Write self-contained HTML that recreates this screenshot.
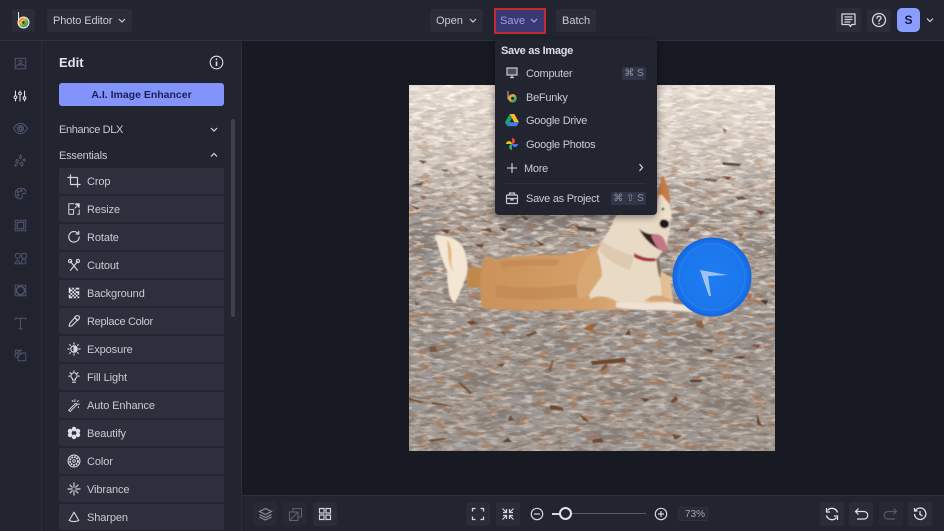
<!DOCTYPE html>
<html><head><meta charset="utf-8"><style>
*{box-sizing:border-box}
html,body{margin:0;width:944px;height:531px;overflow:hidden;background:#181a23}
body{font-family:"Liberation Sans","DejaVu Sans",sans-serif;font-size:11px;color:#c9cbd3;position:relative}
.a{position:absolute}
.t{position:absolute;white-space:nowrap;line-height:14px}
.btn{position:absolute;background:#2a2c38;border-radius:3px}
.it{position:absolute;left:59px;width:165px;height:26px;background:#2d2f3c;border-radius:2px}
.it span{position:absolute;left:28px;top:7px;line-height:14px;color:#c9cbd3;letter-spacing:-.1px;white-space:nowrap}
.it svg{position:absolute;left:8px;top:6px;width:14px;height:14px}
svg{display:block;overflow:visible}
.ic{fill:none;stroke:#d5d6dc;stroke-width:1.3;stroke-linecap:round;stroke-linejoin:round}
.r{position:absolute;left:14px;width:13px;height:13px;fill:none;stroke:#515670;stroke-width:1.2}
.k{position:absolute;background:#323547;border-radius:2px;color:#8d90a0;font-size:10px;line-height:13px;text-align:center}
</style></head><body>

<!-- canvas -->
<div class="a" style="left:242px;top:41px;width:702px;height:455px;background:#181a23"></div>

<!-- photo -->
<svg class="a" style="left:409px;top:85px" width="366" height="366" viewBox="409 85 366 366">
<defs>
<linearGradient id="sand" x1="0" y1="0" x2="0" y2="1">
<stop offset="0" stop-color="#e8ddd3"/><stop offset=".2" stop-color="#ddd0c4"/><stop offset=".36" stop-color="#b3a69b"/><stop offset=".65" stop-color="#a1968d"/><stop offset="1" stop-color="#a59b91"/>
</linearGradient>
<linearGradient id="fade" x1="0" y1="0" x2="0" y2="1">
<stop offset="0" stop-color="#fff" stop-opacity=".15"/><stop offset=".22" stop-color="#fff" stop-opacity=".45"/><stop offset=".38" stop-color="#fff"/><stop offset="1" stop-color="#fff"/>
</linearGradient>
<linearGradient id="fade2" x1="0" y1="0" x2="0" y2="1">
<stop offset="0" stop-color="#fff"/><stop offset=".3" stop-color="#fff" stop-opacity=".7"/><stop offset="1" stop-color="#fff" stop-opacity=".4"/>
</linearGradient>
<mask id="nm"><rect x="409" y="85" width="366" height="366" fill="url(#fade)"/></mask>
<mask id="nm2"><rect x="409" y="85" width="366" height="366" fill="url(#fade2)"/></mask>
<filter id="n1" x="0" y="0" width="100%" height="100%"><feTurbulence type="fractalNoise" baseFrequency=".07 .22" numOctaves="3" seed="7"/><feColorMatrix values="0 0 0 0 .24  0 0 0 0 .19  0 0 0 0 .16  3.6 0 0 0 -1.6"/></filter>
<filter id="n2" x="0" y="0" width="100%" height="100%"><feTurbulence type="fractalNoise" baseFrequency=".09 .28" numOctaves="3" seed="21"/><feColorMatrix values="0 0 0 0 .97  0 0 0 0 .93  0 0 0 0 .89  3 0 0 0 -1.4"/></filter>
<filter id="n3" x="0" y="0" width="100%" height="100%"><feTurbulence type="fractalNoise" baseFrequency=".022 .055" numOctaves="3" seed="4"/><feColorMatrix values="0 0 0 0 .32  0 0 0 0 .3  0 0 0 0 .29  4 0 0 0 -1.85"/></filter>
<filter id="n4" x="0" y="0" width="100%" height="100%"><feTurbulence type="fractalNoise" baseFrequency=".06 .16" numOctaves="2" seed="33"/><feColorMatrix values="0 0 0 0 .36  0 0 0 0 .2  0 0 0 0 .12  0 9 0 0 -5.6"/></filter>
<filter id="b1"><feGaussianBlur stdDeviation=".6"/></filter>
<filter id="b3"><feGaussianBlur stdDeviation=".9"/></filter>
<filter id="b2"><feGaussianBlur stdDeviation="2.5"/></filter>
<radialGradient id="fr" cx=".5" cy=".5" r=".5"><stop offset="0" stop-color="#1f7cf0"/><stop offset=".85" stop-color="#1b76ec"/><stop offset="1" stop-color="#1565dc"/></radialGradient>
<linearGradient id="fur" x1="0" y1="0" x2="1" y2="0"><stop offset="0" stop-color="#cb9159"/><stop offset=".6" stop-color="#d4a06a"/><stop offset="1" stop-color="#e4c29a"/></linearGradient>
</defs>
<rect x="409" y="85" width="366" height="366" fill="url(#sand)"/>
<!-- grey sand clumps -->
<g fill="#6f6a66" opacity=".6" filter="url(#b2)">
<ellipse cx="500" cy="420" rx="24" ry="10"/><ellipse cx="600" cy="436" rx="26" ry="8"/><ellipse cx="475" cy="380" rx="20" ry="9"/><ellipse cx="726" cy="404" rx="24" ry="8"/>
<ellipse cx="625" cy="392" rx="22" ry="8"/><ellipse cx="690" cy="340" rx="22" ry="8"/><ellipse cx="440" cy="345" rx="22" ry="8"/><ellipse cx="560" cy="345" rx="20" ry="9"/><ellipse cx="540" cy="388" rx="18" ry="8"/>
<ellipse cx="755" cy="340" rx="16" ry="8"/><ellipse cx="425" cy="240" rx="14" ry="18"/><ellipse cx="540" cy="225" rx="40" ry="7"/><ellipse cx="760" cy="250" rx="14" ry="8"/>
</g>
<g mask="url(#nm)"><rect x="409" y="85" width="366" height="366" filter="url(#n3)"/><rect x="409" y="85" width="366" height="366" filter="url(#n1)"/><rect x="409" y="85" width="366" height="366" filter="url(#n4)"/></g>
<g mask="url(#nm2)"><rect x="409" y="85" width="366" height="366" filter="url(#n2)"/></g>
<!-- leaves -->
<g fill="#6b3f28" filter="url(#b1)" opacity=".9">
<path d="M591 361l34-3 1 4-34 3z"/><path d="M583 329q7-6 14-5l-6 7z" fill="#a65a2a"/><path d="M548 370l4-10 2 1-3 10z" fill="#8a5a3a"/>
<path d="M433 402l20 4 0 1-22-3z"/><path d="M460 382l12 11-2 1-11-11z"/><path d="M550 405l12 2 2 4-14-2z"/><path d="M689 380l14 0-3 2-9 0z" fill="#3c2a22"/>
<path d="M695 322l7-2 2 9-7-2z" fill="#8b5a3a"/><path d="M732 358q7-3 14-2l-4 3z"/><path d="M429 347l7-1 1 6-7 0z" fill="#7b5038"/>
<path d="M409 398l16 4-5 1-11-3z"/><path d="M600 370l6-7 2 3-5 5z" fill="#7a5238"/><path d="M640 398l10 1-5 3z"/><path d="M670 402l6-6 2 4-5 3z"/>
<path d="M757 414l4 10 3 3-7-2z"/><path d="M592 440l9-2 3 4-11 1z"/><path d="M502 442l6-4 4 4z" fill="#4d382c"/><path d="M428 440l16-2 3 1-16 3z"/>
<path d="M580 415l6 3 3 4-6-2z"/><path d="M672 434l10 2-7 4z"/><path d="M496 365l9-2-3 4z"/><path d="M625 335l4-6 2 6z"/><path d="M702 348l12 2-3 3z" fill="#4f3a2e"/>
<path d="M750 345l11-1-3 4z" fill="#7b4f32"/><path d="M467 322l6-2 4 3-6 2z"/><path d="M510 415l4 5-6 1z"/><path d="M526 335l10-4 1 2-9 4z"/>
<path d="M501 333l3-3 2 7z" fill="#8b5a3a"/><path d="M410 205l10 3-3 2z"/><path d="M440 229l10 1-3 4z"/><path d="M520 215l9 3-3 3z" fill="#6d4a34"/><path d="M480 230l10-2 2 4z"/>
<path d="M535 240l10 4-4 2z"/><path d="M420 195l7 2-4 3z" fill="#9a5f3a"/><path d="M575 226l20 2 2 4-18-2z" fill="#54483f"/><path d="M680 230l10-2-2 4z" fill="#6b4a32"/>
<path d="M735 197l8-1 3 3-8 1z" fill="#6e4c36"/><path d="M755 210l10 1-4 4z"/><path d="M702 180l9-2-2 3z"/><path d="M722 176l10 1-4 3z"/>
<path d="M735 233l9 0-3 4z" fill="#8a5a3a"/><path d="M746 293l6 1-1 6-5-2z" fill="#b5683a"/>
<path d="M475 245l9-1-2 4z"/><path d="M500 227l7 2-3 3z"/><path d="M414 300l6 4-4 2z" fill="#8a5a3a"/><path d="M760 300l8 0-2 5z" fill="#3f332b"/>
<path d="M722 128l5 2-2 4z" fill="#8f6d50"/><path d="M722 162l20 2-3 2-16-1z" fill="#4d4038"/><path d="M702 178l16 2-3 2z" fill="#6a5448"/>
<path d="M418 160l9 1-4 3z" fill="#5c534c"/><path d="M440 170l9-1-3 3z" fill="#6c5f55"/><path d="M410 185l14-3-3 4z" fill="#5a4c44"/>
<path d="M475 175l9 1-4 2z" fill="#6d6056"/><path d="M520 185l10 2-4 2z" fill="#6a5a50"/>
</g>
<!-- dog -->
<g filter="url(#b3)">
<path d="M467 269l22-2 4 22-26-2z" fill="#c2874c"/>
<path d="M482 308q-4-24 0-44 2-6 6-8l6 4q30-6 64-5 22-2 40-10l12-8 60 40 4 30q-18 2-40 2-40 2-80 1-30 2-72-2z" fill="url(#fur)"/>
<path d="M500 262q30-4 60-2l-4 6q-28-2-54 2zM495 285q40 6 90-2l4 12q-50 8-92 2z" fill="#bd8450" opacity=".55"/>
<path d="M435 235q20 0 28 12 6 14 4 26-4 14-12 30-4-2-6-10-2-12-2-22-6-12-12-36z" fill="#f3e6d2"/>
<path d="M447 240q6 6 4 22l2 10q-2-4-4-10z" fill="#e0a868" opacity=".8"/>
<path d="M608 232l10-20 52 3 0 14-4 18-8 10 4 38q-20 14-46 6-14-8-26-2-6-30 18-67z" fill="#e9dac6"/>
<path d="M600 240q14 10 34 16l-4 14q-18-6-30-18z" fill="#d8c2a8" opacity=".7"/>
<path d="M596 248q6 16 6 28l-14 20-10 2q-6-26 18-50z" fill="#d8a873"/>
<path d="M616 302q24 2 50 0 16 2 30 6l-2 4q-24-2-42-2-22 0-36-3z" fill="#efe2d3"/>
<path d="M652 296q12-2 22 6l-16-1-14 0z" fill="#d5a676"/>
<path d="M657 198l5-23q8 12 8 28l-8 8z" fill="#c87b44"/><path d="M655 215l4-20 3 0 8 10 2 14-16 0z" fill="#efe0cc"/>
<circle cx="663" cy="209" r="1.300" fill="#33261c"/>
<path d="M669 222q-4-4-8-2-3 4 0 7 4 3 8-1z" fill="#1f1917"/>
<path d="M639 229q8 6 16 5l13 16q-2 3-6 1-15-7-23-22z" fill="#33201f"/>
<path d="M651 235q9-3 13 4 4 8 3 13-6 0-10-5-4-6-6-12z" fill="#c27985"/>
<path d="M634 253q10 6 21 5l1 3q-12 2-22-4z" fill="#a52a34"/>
<path d="M656 258l3 0 2 14-1 7-2-7z" fill="#7e7058"/>
</g>
<!-- frisbee -->
<circle cx="712" cy="277" r="39.500" fill="url(#fr)"/>
<circle cx="712" cy="277" r="33" fill="none" stroke="#3a8df5" stroke-width="1" opacity=".5"/>
<path d="M700 270l28 5-20 1 3 20-2 0z" fill="#9dc3f0"/>
</svg>

<!-- left rail + panel -->
<div class="a" style="left:0;top:41px;width:41px;height:490px;background:#21232e"></div>
<div class="a" style="left:41px;top:41px;width:1px;height:490px;background:#2b2d39"></div>
<div class="a" style="left:42px;top:41px;width:199px;height:490px;background:#22242f"></div>
<div class="a" style="left:241px;top:41px;width:1px;height:490px;background:#2b2d39"></div>

<!-- top bar -->
<div class="a" style="left:0;top:0;width:944px;height:41px;background:#22242f;border-bottom:1px solid #2f313d"></div>
<div class="btn" style="left:12px;top:9px;width:23px;height:23px"></div>
<svg class="a" style="left:12px;top:9px" width="23" height="23" viewBox="0 0 23 23">
<path d="M6.500 3v13" stroke="#e8e8ec" stroke-width="1" fill="none"/>
<defs><linearGradient id="lg" x1="0" y1="0" x2="1" y2="1"><stop offset="0" stop-color="#e54b3c"/><stop offset=".35" stop-color="#f2b632"/><stop offset=".65" stop-color="#4caf50"/><stop offset="1" stop-color="#4a6fd8"/></linearGradient></defs>
<circle cx="11.500" cy="13.500" r="6" fill="#f1f1f3"/><circle cx="11.500" cy="13.500" r="5" fill="url(#lg)"/><circle cx="11.500" cy="13.500" r="1.200" fill="#222"/>
</svg>
<div class="btn" style="left:47px;top:9px;width:85px;height:23px"></div>
<div class="t" style="left:53px;top:14px;letter-spacing:-.1px">Photo Editor</div>
<svg class="a" style="left:118px;top:18px" width="8" height="6"><path d="M1 1l3 3 3-3" fill="none" stroke="#c9cbd3" stroke-width="1.200"/></svg>

<div class="btn" style="left:430px;top:9px;width:53px;height:23px"></div>
<div class="t" style="left:436px;top:14px">Open</div>
<svg class="a" style="left:469px;top:18px" width="8" height="6"><path d="M1 1l3 3 3-3" fill="none" stroke="#c9cbd3" stroke-width="1.200"/></svg>

<div class="a" style="left:494px;top:8px;width:52px;height:26px;background:#3a3873;border:2px solid #c22b30"></div>
<div class="t" style="left:500px;top:14px;color:#9b9ff0">Save</div>
<svg class="a" style="left:530px;top:18px" width="8" height="6"><path d="M1 1l3 3 3-3" fill="none" stroke="#a3a7f5" stroke-width="1.200"/></svg>

<div class="btn" style="left:556px;top:9px;width:40px;height:23px"></div>
<div class="t" style="left:562px;top:14px">Batch</div>

<div class="btn" style="left:836px;top:8px;width:25px;height:24px"></div>
<svg class="a" style="left:840px;top:12px" width="17" height="17" viewBox="0 0 17 17"><path class="ic" d="M2 2h13v10.500h-3.500l-1 2-1.500-2H2zM5 5h7M5 7.500h7M5 10h5" stroke-width="1.100"/></svg>
<div class="btn" style="left:867px;top:9px;width:24px;height:23px"></div>
<svg class="a" style="left:871px;top:12px" width="16" height="16" viewBox="0 0 16 16"><circle class="ic" cx="8" cy="8" r="6.500" stroke-width="1.200"/><path class="ic" d="M6 6.300q0-2 2-2t2 1.800q0 1-1 1.500t-1 1.700" stroke-width="1.100"/><circle cx="8" cy="11.500" r=".8" fill="#d5d6dc"/></svg>
<div class="a" style="left:897px;top:8px;width:23px;height:24px;background:#8b9dff;border-radius:5px;color:#15173f;font-weight:bold;font-size:12px;line-height:24px;text-align:center">S</div>
<svg class="a" style="left:925px;top:17px" width="10" height="7"><path d="M2 1.500l3 3 3-3" fill="none" stroke="#d5d6dc" stroke-width="1.200"/></svg>

<!-- rail icons -->
<svg class="r" style="top:56.500px" viewBox="0 0 16 16"><rect x="1.500" y="1.500" width="13" height="13"/><circle cx="8" cy="6" r="2"/><path d="M1.500 12l4-3q2.500 2 5 0l4 3"/></svg>
<svg class="a" style="left:13px;top:89px;width:14px;height:14px" viewBox="0 0 17 17" fill="none" stroke="#dfe0e6" stroke-width="1.300"><path d="M3 2v6M3 12v3M8.500 2v1M8.500 8v7M14 2v7M14 13v2"/><circle cx="3" cy="10" r="1.700"/><circle cx="8.500" cy="5.500" r="1.700"/><circle cx="14" cy="11" r="1.700"/></svg>
<svg class="r" style="left:13px;width:15px;height:15px;top:120.500px" viewBox="0 0 16 16"><path d="M.5 8q3.500-5.500 7.500-5.500T15.500 8q-3.500 5.500-7.500 5.500T.5 8z"/><circle cx="8" cy="8" r="3.200"/><circle cx="8" cy="8" r="1.500"/></svg>
<svg class="r" style="top:153.500px" viewBox="0 0 16 16" stroke-width="1.500"><path d="M8 1l1.500 2.500L8 6 6.500 3.500zM12.500 6l1.500 1.500-1.500 1.500L11 7.500zM4 6.500L6 9 4 12 2 9zM9.500 10l2 2-2 3-2-3zM2 13l1 1-1 1-1-1z"/></svg>
<svg class="r" style="top:186.500px" viewBox="0 0 16 16"><path d="M8 1.500q6.500 0 6.500 5 0 2-2 1.500-3-.5-2.500 2 1 3-2 4.500-6 0-6.500-6Q1.500 2 8 1.500z"/><circle cx="5" cy="6" r="1" fill="#515670"/><circle cx="9" cy="4.500" r="1" fill="#515670"/><circle cx="5" cy="10" r="1" fill="#515670"/></svg>
<svg class="r" style="top:218.500px" viewBox="0 0 16 16"><rect x="1.500" y="1.500" width="13" height="13"/><rect x="4" y="4" width="8" height="8" stroke-width="1.500"/></svg>
<svg class="r" style="top:251.500px" viewBox="0 0 16 16"><circle cx="4.500" cy="4.500" r="3"/><rect x="9.500" y="2" width="5.500" height="5.500"/><path d="M4.500 9.500L8 14.500H1z"/><circle cx="12" cy="12" r="2.800"/></svg>
<svg class="r" style="top:283.500px" viewBox="0 0 16 16"><rect x="1.500" y="1.500" width="13" height="13"/><circle cx="8" cy="8" r="5" stroke-width="1.800"/></svg>
<svg class="r" style="top:316.500px" viewBox="0 0 16 16"><path d="M1.500 3.500v-2h13v2M8 1.500v13M5.500 14.500h5"/></svg>
<svg class="r" style="top:348.500px" viewBox="0 0 16 16"><rect x="5" y="5" width="9.500" height="9.500"/><path d="M1.500 10V2.500q0-1 1-1H10M2 7q3-4.500 7-5M3 11q5-6 9-6"/></svg>

<!-- panel head -->
<div class="t" style="left:59px;top:56px;font-size:13px;font-weight:bold;color:#e4e5ea">Edit</div>
<svg class="a" style="left:209px;top:54.500px" width="15" height="15" viewBox="0 0 15 15" fill="none" stroke="#dcdde3" stroke-width="1.100"><circle cx="7.500" cy="7.500" r="6.300"/><path d="M7.500 6.500v4.500" stroke-width="1.600"/><circle cx="7.500" cy="4.300" r=".9" fill="#dcdde3" stroke="none"/></svg>
<div class="a" style="left:59px;top:83px;width:165px;height:23px;background:#8294fb;border-radius:3px;color:#1a1f56;font-weight:bold;font-size:10.500px;line-height:24px;text-align:center">A.I. Image Enhancer</div>
<div class="t" style="left:59px;top:123px;letter-spacing:-.35px">Enhance DLX</div>
<svg class="a" style="left:210px;top:127px" width="8" height="6"><path d="M1 1l3 3 3-3" fill="none" stroke="#d5d6dc" stroke-width="1.200"/></svg>
<div class="t" style="left:59px;top:149px;letter-spacing:-.2px">Essentials</div>
<svg class="a" style="left:210px;top:152px" width="8" height="6"><path d="M1 4.500l3-3 3 3" fill="none" stroke="#d5d6dc" stroke-width="1.200"/></svg>

<!-- list -->
<div class="it" style="top:168px"><svg class="ic" viewBox="0 0 16 16"><path d="M4 1v11h11M1 4h11v11"/></svg><span>Crop</span></div>
<div class="it" style="top:196px"><svg class="ic" viewBox="0 0 16 16"><path d="M2 8V2h6M10 2h4v4M14 9v5h-2M2 8.500h5.500V14H2zM9 7l4-4M10 3h3v3" stroke-width="1.100"/></svg><span>Resize</span></div>
<div class="it" style="top:224px"><svg class="ic" viewBox="0 0 16 16"><path d="M13 4.500A6 6 0 1 0 14 8M13.500 1.500v3.200h-3.200"/></svg><span>Rotate</span></div>
<div class="it" style="top:252px"><svg class="ic" viewBox="0 0 16 16"><path d="M4 14L12 4M12 14L4 4"/><circle cx="3.500" cy="3.500" r="1.800"/><circle cx="12.500" cy="3.500" r="1.800"/></svg><span>Cutout</span></div>
<div class="it" style="top:280px"><svg viewBox="0 0 16 16"><rect x="2" y="2" width="12" height="12" fill="#e2e3e8"/><path d="M4 2h2v2H4zM8 2h2v2H8zM12 4h2v2h-2zM6 4h2v2H6zM10 4h2v2h-2zM4 6h2v2H4zM8 6h2v2H8zM2 8h2v2H2zM6 8h2v2H6zM10 8h2v2h-2zM4 10h2v2H4zM8 10h2v2H8zM12 10h2v2h-2zM6 12h2v2H6zM10 12h2v2h-2z" fill="#2d2f3c"/></svg><span>Background</span></div>
<div class="it" style="top:308px"><svg class="ic" viewBox="0 0 16 16"><path d="M9 4l3 3-6.500 6.500-3 .5.500-3zM10 2.500q2-1.500 3.500 0t0 3.500L12 7.500 8.500 4z"/></svg><span style="letter-spacing:-.3px">Replace Color</span></div>
<div class="it" style="top:336px"><svg class="ic" viewBox="0 0 16 16"><circle cx="8" cy="8" r="3.700"/><path d="M8 4.500a3.500 3.500 0 0 1 0 7z" fill="#d5d6dc"/><path d="M8 1v1.500M8 13.500V15M1 8h1.500M13.500 8H15M3 3l1 1M12 12l1 1M3 13l1-1M12 4l1-1"/></svg><span>Exposure</span></div>
<div class="it" style="top:364px"><svg class="ic" viewBox="0 0 16 16"><path d="M6.500 11.500q0-2-1.500-3a3.500 3.500 0 1 1 6 0q-1.500 1-1.500 3zM6.500 14h3M8 1v1M2 7h1M13 7h1M3.500 3l.8.8M12.500 3l-.8.8"/></svg><span>Fill Light</span></div>
<div class="it" style="top:392px"><svg class="ic" viewBox="0 0 16 16"><path d="M2 14L10 6l1.500 1.500L3.500 15.500zM9 2v2M13 3l-1 1M14 7h-2M6 3l1 1M13 10v1" stroke-width="1.200"/></svg><span>Auto Enhance</span></div>
<div class="it" style="top:420px"><svg viewBox="0 0 16 16" fill="#dfe0e6"><circle cx="8" cy="3.500" r="2.600"/><circle cx="8" cy="12.500" r="2.600"/><circle cx="3.500" cy="5.800" r="2.600"/><circle cx="12.500" cy="5.800" r="2.600"/><circle cx="3.500" cy="10.200" r="2.600"/><circle cx="12.500" cy="10.200" r="2.600"/><circle cx="8" cy="8" r="1.600" fill="#2d2f3c"/></svg><span>Beautify</span></div>
<div class="it" style="top:448px"><svg viewBox="0 0 16 16" fill="none" stroke="#dfe0e6"><circle cx="8" cy="8" r="6.800" stroke-width="1.200"/><circle cx="8" cy="8" r="4.500" stroke-width="2" stroke-dasharray="2 1"/><circle cx="8" cy="8" r="1.500" stroke-width="1"/></svg><span>Color</span></div>
<div class="it" style="top:476px"><svg class="ic" viewBox="0 0 16 16"><path d="M8 1v5M8 10v5M1 8h5M10 8h5M3.500 3.500L6 6M10 10l2.500 2.500M3.500 12.500L6 10M10 6l2.500-2.500"/></svg><span>Vibrance</span></div>
<div class="it" style="top:504px"><svg class="ic" viewBox="0 0 16 16"><path d="M8 2.500l5.500 9.500q-5.500 2.500-11 0z"/></svg><span>Sharpen</span></div>
<div class="a" style="left:231px;top:119px;width:4px;height:198px;background:#3e404e;border-radius:2px"></div>

<!-- bottom bar -->
<div class="a" style="left:242px;top:495px;width:702px;height:36px;background:#22242f;border-top:1px solid #2d2f3b"></div>
<div class="btn" style="left:253px;top:502px;width:24px;height:24px;background:#272935"></div>
<svg class="a" style="left:258px;top:507px" width="15" height="15" viewBox="0 0 15 15" fill="none" stroke="#8d8f9b" stroke-width="1.100"><path d="M7.500 1.500l6 3-6 3-6-3zM1.500 7.500l6 3 6-3M1.500 10l6 3 6-3"/></svg>
<div class="btn" style="left:283px;top:502px;width:24px;height:24px;background:#262833"></div>
<svg class="a" style="left:288px;top:507px" width="15" height="15" viewBox="0 0 15 15" fill="none" stroke="#5f616c" stroke-width="1.100"><rect x="1.500" y="5" width="8.500" height="8.500"/><path d="M5 5V1.500h8.500V10H10M2 13l8-8"/></svg>
<div class="btn" style="left:313px;top:502px;width:24px;height:24px"></div>
<svg class="a" style="left:318px;top:507px" width="14" height="14" viewBox="0 0 14 14" fill="none" stroke="#d5d6dc" stroke-width="1.200"><rect x="1.500" y="1.500" width="4.500" height="4.500"/><rect x="8" y="1.500" width="4.500" height="4.500"/><rect x="1.500" y="8" width="4.500" height="4.500"/><rect x="8" y="8" width="4.500" height="4.500"/></svg>
<div class="btn" style="left:466px;top:502px;width:24px;height:24px"></div>
<svg class="a" style="left:471px;top:507px" width="14" height="14" viewBox="0 0 14 14" fill="none" stroke="#d5d6dc" stroke-width="1.300"><path d="M1.500 4.500v-3h3M9.500 1.500h3v3M12.500 9.500v3h-3M4.500 12.500h-3v-3"/></svg>
<div class="btn" style="left:496px;top:502px;width:24px;height:24px"></div>
<svg class="a" style="left:501px;top:507px" width="14" height="14" viewBox="0 0 14 14" fill="none" stroke="#d5d6dc" stroke-width="1.200"><path d="M1.500 1.500l3.500 3.500M2 5.500h3.500V2M12.500 1.500L9 5M12 5.500H8.500V2M1.500 12.500L5 9M2 8.500h3.500V12M12.500 12.500L9 9M12 8.500H8.500V12"/></svg>
<svg class="a" style="left:530px;top:507px" width="14" height="14" viewBox="0 0 14 14" fill="none" stroke="#d5d6dc" stroke-width="1.200"><circle cx="7" cy="7" r="5.700"/><path d="M4 7h6"/></svg>
<div class="a" style="left:552px;top:513px;width:12px;height:2px;background:#d5d6dc"></div>
<div class="a" style="left:565px;top:513px;width:81px;height:1px;background:#5a5c68"></div>
<div class="a" style="left:559px;top:507px;width:13px;height:13px;border-radius:50%;background:#22242f;border:2px solid #e2e3e8"></div>
<svg class="a" style="left:654px;top:507px" width="14" height="14" viewBox="0 0 14 14" fill="none" stroke="#d5d6dc" stroke-width="1.200"><circle cx="7" cy="7" r="5.700"/><path d="M4 7h6M7 4v6"/></svg>
<div class="a" style="left:678px;top:507px;width:30px;height:14px;background:#272935;border:1px solid #2f313d;border-radius:2px;color:#a4a6b0;font-size:10px;line-height:13px;text-align:right;padding-right:2px">73%</div>
<div class="btn" style="left:820px;top:502px;width:24px;height:24px"></div>
<svg class="a" style="left:825px;top:507px" width="14" height="14" viewBox="0 0 14 14" fill="none" stroke="#dfe0e6" stroke-width="1.400"><path d="M12.500 5.500A5.700 5.700 0 0 0 2.500 3.500M1.500 8.500a5.700 5.700 0 0 0 10 2"/><path d="M1.500 1v4h3.500M12.500 13V9H9" stroke-width="1.200"/></svg>
<div class="btn" style="left:849px;top:502px;width:24px;height:24px"></div>
<svg class="a" style="left:854px;top:507px" width="14" height="14" viewBox="0 0 14 14" fill="none" stroke="#dfe0e6" stroke-width="1.200"><path d="M4.500 1.500L1.500 4.500l3 3M1.500 4.500H10a3 3 0 0 1 0 7.500H3"/></svg>
<div class="btn" style="left:879px;top:502px;width:24px;height:24px;background:#262833"></div>
<svg class="a" style="left:884px;top:507px" width="14" height="14" viewBox="0 0 14 14" fill="none" stroke="#565864" stroke-width="1.200"><path d="M9.500 1.500l3 3-3 3M12.500 4.500H4a3 3 0 0 0 0 7.500h7"/></svg>
<div class="btn" style="left:908px;top:502px;width:24px;height:24px"></div>
<svg class="a" style="left:913px;top:507px" width="14" height="14" viewBox="0 0 14 14" fill="none" stroke="#dfe0e6" stroke-width="1.300"><path d="M2.500 3.500A5.700 5.700 0 1 1 1.500 7M1.500 1v3h3M7 4v3.500l2.500 1.500"/></svg>

<!-- Save dropdown -->
<div class="a" style="left:495px;top:39px;width:162px;height:176px;background:#22242f;border-radius:4px;box-shadow:0 2px 8px rgba(0,0,0,.45)"></div>
<div class="t" style="left:501px;top:44px;font-weight:bold;color:#dedfe5;letter-spacing:-.3px">Save as Image</div>
<svg class="a" style="left:505px;top:66px" width="14" height="14" viewBox="0 0 14 14" fill="none" stroke="#c9cbd3" stroke-width="1.200"><rect x="2" y="2" width="10" height="7" fill="#c9cbd3" fill-opacity=".25"/><path d="M5 11.500h4M7 9v2.500"/></svg>
<div class="t" style="left:526px;top:67px;letter-spacing:-.26px">Computer</div>
<div class="k" style="left:622px;top:67px;width:24px;height:13px">⌘ S</div>
<svg class="a" style="left:505px;top:90px" width="14" height="14" viewBox="0 0 14 14"><path d="M3 1v8" stroke="#e5e5ea" stroke-width=".8"/><circle cx="7.500" cy="8.300" r="4.300" fill="url(#lg)"/><circle cx="7.500" cy="8.300" r="1.500" fill="#222"/></svg>
<div class="t" style="left:526px;top:91px;letter-spacing:-.26px">BeFunky</div>
<svg class="a" style="left:505px;top:114px" width="14" height="13" viewBox="0 0 14 13"><path d="M4.700 0h4.600l4.700 8.300H9.300z" fill="#f7bb2a"/><path d="M4.700 0L0 8.300l2.300 4L7 4z" fill="#1fa463"/><path d="M2.300 12.300h9.400l2.300-4H4.600z" fill="#3f7ee8"/></svg>
<div class="t" style="left:526px;top:114px;letter-spacing:-.26px">Google Drive</div>
<svg class="a" style="left:505px;top:137px" width="14" height="14" viewBox="0 0 14 14"><path d="M7 7V1a3 3 0 0 1 0 6z" fill="#e9493a"/><path d="M7 7h6a3 3 0 0 1-6 0z" fill="#3f7ee8"/><path d="M7 7v6a3 3 0 0 1 0-6z" fill="#34a853"/><path d="M7 7H1a3 3 0 0 1 6 0z" fill="#fbbc04"/></svg>
<div class="t" style="left:526px;top:138px;letter-spacing:-.26px">Google Photos</div>
<svg class="a" style="left:506px;top:162px" width="12" height="12" viewBox="0 0 12 12"><path d="M6 1v10M1 6h10" stroke="#d5d6dc" stroke-width="1.100"/></svg>
<div class="t" style="left:524px;top:162px;letter-spacing:-.26px">More</div>
<svg class="a" style="left:638px;top:163px" width="6" height="9"><path d="M1.500 1l3 3.500-3 3.500" fill="none" stroke="#d5d6dc" stroke-width="1.200"/></svg>
<div class="a" style="left:505px;top:183px;width:141px;height:1px;background:#2e303c"></div>
<svg class="a" style="left:505px;top:191px" width="14" height="14" viewBox="0 0 14 14" fill="none" stroke="#c9cbd3" stroke-width="1.200"><rect x="1.500" y="4" width="11" height="8.500" rx="1"/><path d="M4.500 4V2h5v2M1.500 7.500h11M6 7.500v1.500h2V7.500"/></svg>
<div class="t" style="left:526px;top:192px;letter-spacing:-.26px">Save as Project</div>
<div class="k" style="left:611px;top:192px;width:35px;height:13px">⌘ ⇧ S</div>

</body></html>
